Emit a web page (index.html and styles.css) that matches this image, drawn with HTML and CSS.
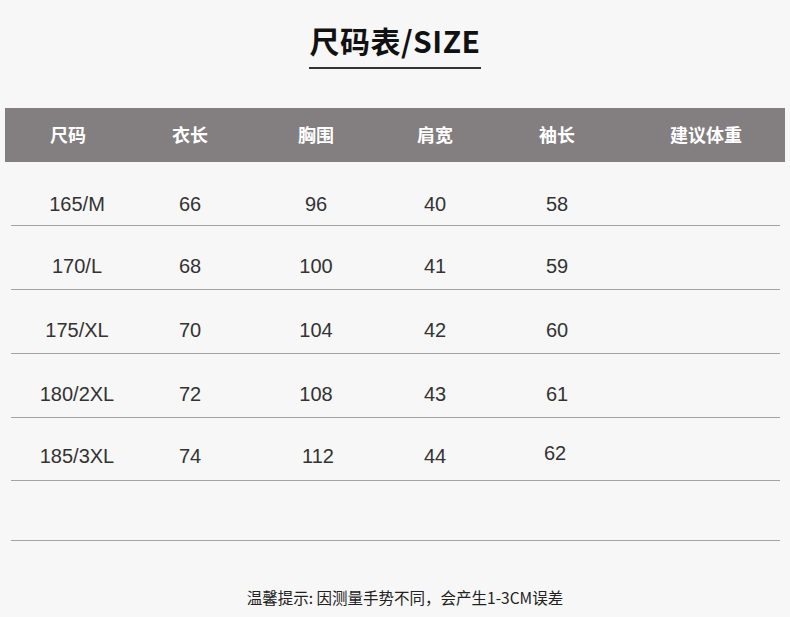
FILE: index.html
```html
<!DOCTYPE html>
<html lang="zh">
<head>
<meta charset="utf-8">
<link rel="stylesheet" href="styles.css">
</head>
<body>
<div class="page">
  <div class="title-wrap">
    <h1 class="title">尺码表/SIZE</h1>
    <div class="title-line"></div>
  </div>
  <div class="head">
    <div>尺码</div><div>衣长</div><div>胸围</div><div>肩宽</div><div>袖长</div><div>建议体重</div>
  </div>
  <div class="rows">
    <div class="row"><div>165/M</div><div>66</div><div>96</div><div>40</div><div>58</div><div></div></div>
    <div class="row"><div>170/L</div><div>68</div><div>100</div><div>41</div><div>59</div><div></div></div>
    <div class="row"><div>175/XL</div><div>70</div><div>104</div><div>42</div><div>60</div><div></div></div>
    <div class="row"><div>180/2XL</div><div>72</div><div>108</div><div>43</div><div>61</div><div></div></div>
    <div class="row"><div>185/3XL</div><div>74</div><div class="shift-r">112</div><div>44</div><div class="shift-up">62</div><div></div></div>
    <div class="row empty"></div>
  </div>
  <p class="note">温馨提示: 因测量手势不同，会产生1-3CM误差</p>
</div>
</body>
</html>
```

FILE: styles.css
```css
html, body {
  margin: 0;
  padding: 0;
  background: #f7f7f7;
}
.page {
  width: 790px;
  height: 617px;
  overflow: hidden;
  font-family: "Liberation Sans", Arial, "Noto Sans CJK SC", sans-serif;
}
.title-wrap {
  padding-top: 20px;
  display: flex;
  flex-direction: column;
  align-items: center;
}
.title {
  margin: 0;
  font-family: "Noto Sans CJK SC", sans-serif;
  font-weight: 700;
  font-size: 30px;
  line-height: 40px;
  color: #111;
  letter-spacing: 0.5px;
}
.title-line {
  width: 172px;
  height: 2px;
  background: #333;
  margin-top: 7px;
}
.head {
  margin: 39px 5px 0 5px;
  height: 54px;
  background: #837e7f;
  display: grid;
  grid-template-columns: 126px 118px 134px 104px 140px 158px;
  align-items: center;
  text-align: center;
  color: #fff;
  font-family: "Noto Sans CJK SC", sans-serif;
  font-weight: 700;
  font-size: 18px;
  line-height: 20px;
  padding-bottom: 3px;
  box-sizing: border-box;
}
.rows {
  margin: 0 10px 0 11px;
}
.row {
  display: grid;
  grid-template-columns: 132px 94px 158px 80px 164px 1fr;
  height: 64px;
  box-sizing: border-box;
  border-bottom: 1px solid #a3a3a3;
  padding-top: 30px;
  text-align: center;
  color: #333;
  font-size: 20px;
  line-height: 20px;
}
.row:first-child {
  padding-top: 32px;
}
.row:nth-child(5) {
  height: 63px;
  padding-top: 28px;
}
.row.empty {
  height: 60px;
}
.shift-r {
  padding-left: 4px;
}
.shift-up {
  margin-top: -3px;
  padding-right: 4px;
}
.note {
  margin: 46px 0 0 0;
  text-align: center;
  padding-left: 20px;
  font-family: "Noto Sans CJK SC", sans-serif;
  font-size: 15.5px;
  line-height: 20px;
  color: #222;
}
```
